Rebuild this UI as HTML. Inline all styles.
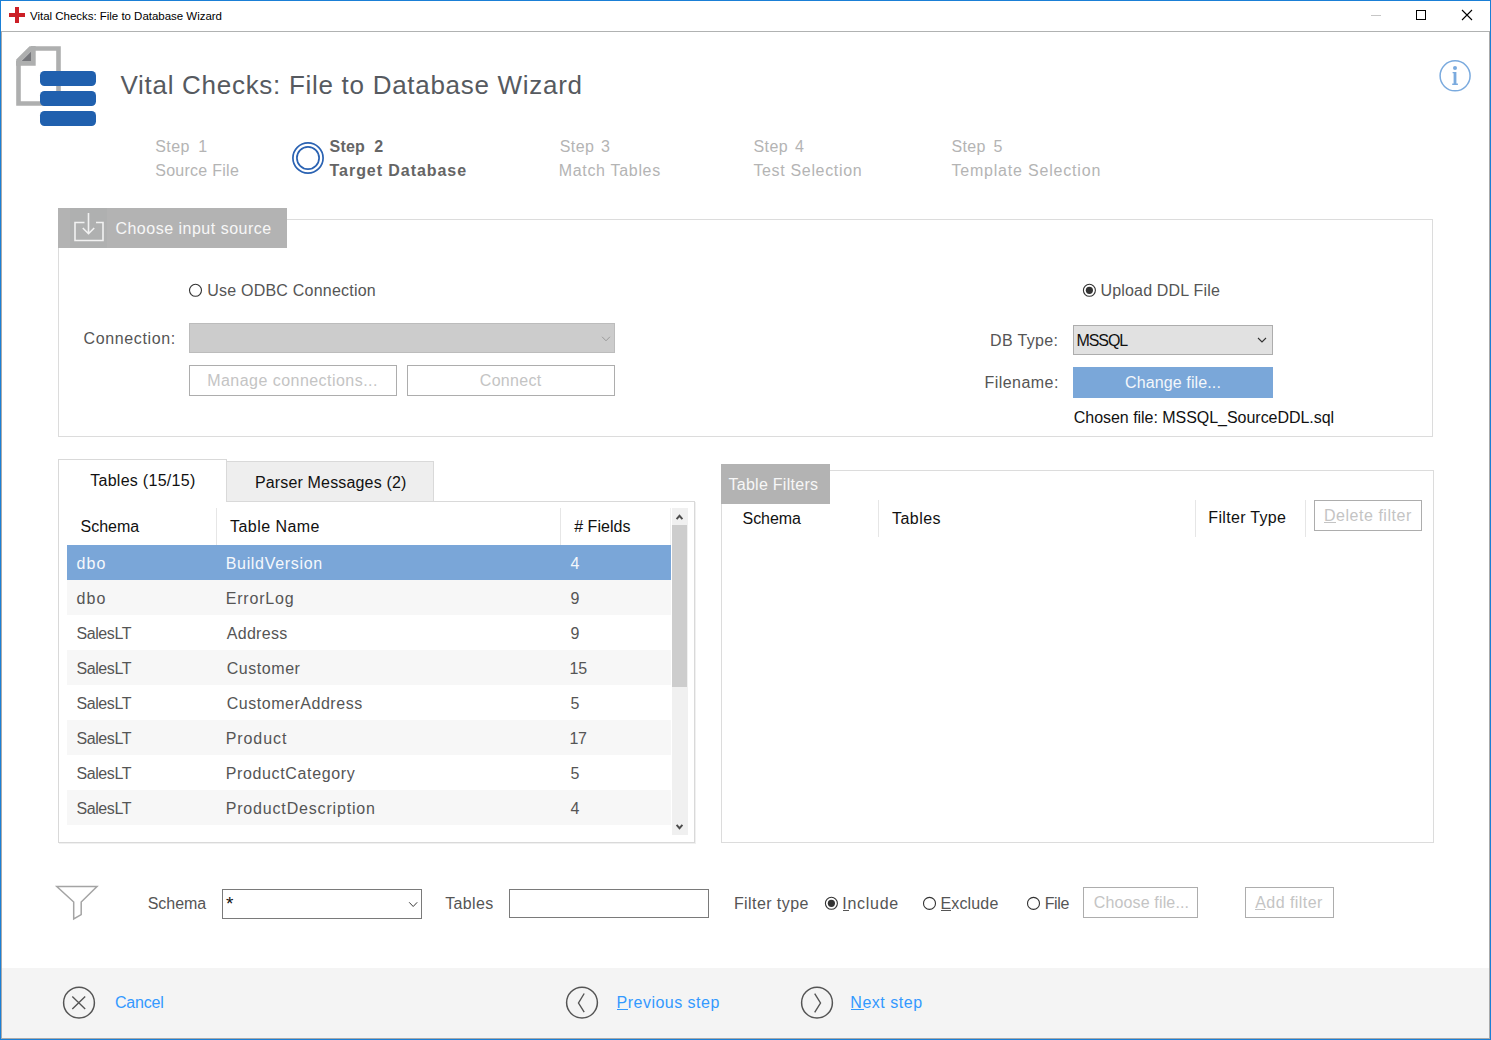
<!DOCTYPE html>
<html>
<head>
<meta charset="utf-8">
<title>Vital Checks: File to Database Wizard</title>
<style>
html,body{margin:0;padding:0;}
body{width:1491px;height:1040px;overflow:hidden;position:relative;background:#ffffff;font-family:"Liberation Sans",sans-serif;}
.a{position:absolute;box-sizing:border-box;}
.t{position:absolute;white-space:nowrap;line-height:1;font-family:"Liberation Sans",sans-serif;}
.ul{position:absolute;height:1px;}
svg{position:absolute;overflow:visible;}
</style>
</head>
<body>
<!-- window frame -->
<div class="a" style="left:0;top:0;width:1491px;height:1040px;border:1px solid #1a7fd6;"></div>
<div class="a" style="left:1px;top:31px;width:1489px;height:1008px;border:1px solid #aaaaaa;border-top-color:#b0b2b2;"></div>
<!-- title bar icon -->
<div class="a" style="left:9px;top:13px;width:16px;height:4px;background:#cc1f26;"></div>
<div class="a" style="left:15px;top:7px;width:4px;height:16px;background:#cc1f26;"></div>
<!-- window buttons -->
<div class="a" style="left:1371px;top:15px;width:10px;height:1px;background:#c6c6c6;"></div>
<div class="a" style="left:1416px;top:10px;width:10px;height:10px;border:1px solid #000;"></div>
<svg style="left:1462px;top:10px" width="10" height="10" viewBox="0 0 10 10"><path d="M0 0L10 10M10 0L0 10" stroke="#000" stroke-width="1.1"/></svg>
<!-- logo -->
<svg style="left:0;top:0" width="110" height="130" viewBox="0 0 110 130">
  <path d="M30.5 48.5 H58.5 V103.5 H18.5 V60.5 Z" fill="#fff" stroke="#aeafaf" stroke-width="4.6"/>
  <path d="M33.3 46 V63.3 H16" fill="none" stroke="#aeafaf" stroke-width="4.8"/>
  <path d="M21.5 61 L31 51.5 V61 Z" fill="#76777b"/>
  <rect x="40" y="71" width="56" height="15" rx="4.5" fill="#2060ae"/>
  <rect x="40" y="91" width="56" height="15" rx="4.5" fill="#2060ae"/>
  <rect x="40" y="111" width="56" height="15" rx="4.5" fill="#2060ae"/>
</svg>
<!-- info icon -->
<svg style="left:1439px;top:60px" width="32" height="32" viewBox="0 0 32 32">
  <circle cx="16.1" cy="15.8" r="15.0" fill="none" stroke="#7aaade" stroke-width="1.5"/>
  <circle cx="16" cy="8.1" r="2" fill="#7aaade"/>
  <path d="M13.6 11.9 H17.4 V23.4 H18.9 V24.9 H13.2 V23.4 H14.6 V13.2 H13.6 Z" fill="#7aaade"/>
</svg>
<!-- step 2 circle -->
<svg style="left:292px;top:142px" width="32" height="32" viewBox="0 0 32 32">
  <circle cx="16" cy="16" r="15.1" fill="none" stroke="#2a62b2" stroke-width="1.7"/>
  <circle cx="16" cy="16" r="11.1" fill="none" stroke="#2a62b2" stroke-width="1.7"/>
</svg>
<!-- group box -->
<div class="a" style="left:58px;top:219px;width:1375px;height:218px;border:1px solid #dcdcdc;"></div>
<div class="a" style="left:58px;top:208px;width:229px;height:40px;background:#b3b3b3;"></div>
<div class="a" style="left:70px;top:208px;width:37px;height:40px;background:#afb0b0;"></div>
<svg style="left:70px;top:208px" width="40" height="40" viewBox="0 0 40 40">
  <path d="M14.5 14.5 H5 V32.5 H33 V14.5 H26" fill="none" stroke="#f2f2f2" stroke-width="1.6"/>
  <path d="M18.5 5 V25.5 M12.8 20 L18.5 25.7 L24.2 20" fill="none" stroke="#f2f2f2" stroke-width="1.6"/>
</svg>
<!-- radios -->
<svg style="left:188px;top:283px" width="15" height="15" viewBox="0 0 15 15"><circle cx="7.5" cy="7.3" r="6" fill="#fff" stroke="#333" stroke-width="1.1"/></svg>
<svg style="left:1082px;top:283px" width="15" height="15" viewBox="0 0 15 15"><circle cx="7.4" cy="7.3" r="6" fill="#fff" stroke="#333" stroke-width="1.1"/><circle cx="7.4" cy="7.3" r="3.6" fill="#333"/></svg>
<!-- connection combo -->
<div class="a" style="left:189px;top:323px;width:426px;height:30px;background:#cccccc;border:1px solid #bcbcbc;"></div>
<svg style="left:600px;top:335px" width="11" height="8" viewBox="0 0 11 8"><path d="M2.1 1.8 L6 5.8 L9.9 1.8" fill="none" stroke="#9a9a9a" stroke-width="1"/></svg>
<div class="a" style="left:189px;top:365px;width:208px;height:31px;border:1px solid #adadad;background:#fff;"></div>
<div class="a" style="left:407px;top:365px;width:208px;height:31px;border:1px solid #adadad;background:#fff;"></div>
<!-- db type combo -->
<div class="a" style="left:1073px;top:325px;width:200px;height:30px;background:#e1e1e1;border:1px solid #adadad;"></div>
<svg style="left:1256px;top:336px" width="12" height="8" viewBox="0 0 12 8"><path d="M2 2 L6 6 L10 2" fill="none" stroke="#333" stroke-width="1.1"/></svg>
<div class="a" style="left:1073px;top:367px;width:200px;height:31px;background:#7aa7d9;"></div>
<!-- tabs -->
<div class="a" style="left:58px;top:501px;width:637px;height:342px;border:1px solid #d9d9d9;"></div>
<div class="a" style="left:695px;top:502px;width:1px;height:342px;background:#f0f0f0;"></div>
<div class="a" style="left:59px;top:843px;width:637px;height:1px;background:#f0f0f0;"></div>
<div class="a" style="left:226px;top:461px;width:208px;height:41px;background:#eeeeee;border:1px solid #d9d9d9;"></div>
<div class="a" style="left:58px;top:459px;width:169px;height:43px;background:#fff;border:1px solid #d9d9d9;border-bottom:none;"></div>
<!-- table header separators -->
<div class="a" style="left:216px;top:508px;width:1px;height:37px;background:#e6e6e6;"></div>
<div class="a" style="left:560px;top:508px;width:1px;height:37px;background:#e6e6e6;"></div>
<div class="a" style="left:670px;top:508px;width:1px;height:37px;background:#f0f0f0;"></div>
<!-- rows -->
<div class="a" style="left:67px;top:545px;width:604px;height:35px;background:#7aa6d8;"></div>
<div class="a" style="left:67px;top:580px;width:604px;height:35px;background:#f7f7f7;"></div>
<div class="a" style="left:67px;top:650px;width:604px;height:35px;background:#f7f7f7;"></div>
<div class="a" style="left:67px;top:720px;width:604px;height:35px;background:#f7f7f7;"></div>
<div class="a" style="left:67px;top:790px;width:604px;height:35px;background:#f7f7f7;"></div>
<!-- scrollbar -->
<div class="a" style="left:672px;top:508px;width:16px;height:327px;background:#f0f0f0;"></div>
<div class="a" style="left:672px;top:525px;width:15px;height:162px;background:#cdcdcd;"></div>
<svg style="left:672px;top:508px" width="16" height="17" viewBox="0 0 16 17"><path d="M4.6 11.2 L7.5 7.8 L10.4 11.2" fill="none" stroke="#4d4d4d" stroke-width="1.9"/></svg>
<svg style="left:672px;top:818px" width="16" height="17" viewBox="0 0 16 17"><path d="M4.6 6.8 L7.5 10.2 L10.4 6.8" fill="none" stroke="#4d4d4d" stroke-width="1.9"/></svg>
<!-- table filters panel -->
<div class="a" style="left:721px;top:470px;width:713px;height:373px;border:1px solid #dcdcdc;"></div>
<div class="a" style="left:721px;top:464px;width:109px;height:40px;background:#b3b3b3;"></div>
<div class="a" style="left:878px;top:500px;width:1px;height:37px;background:#e6e6e6;"></div>
<div class="a" style="left:1195px;top:500px;width:1px;height:37px;background:#e6e6e6;"></div>
<div class="a" style="left:1305px;top:500px;width:1px;height:37px;background:#e6e6e6;"></div>
<div class="a" style="left:1314px;top:500px;width:108px;height:31px;border:1px solid #adadad;background:#fff;"></div>
<!-- filter row -->
<svg style="left:50px;top:880px" width="56" height="48" viewBox="0 0 56 48">
  <path d="M6.8 6.6 H47 L31.2 22 V34.6 L23.7 39 V22 Z" fill="none" stroke="#a4a4a4" stroke-width="1.5" stroke-linejoin="miter"/>
</svg>
<div class="a" style="left:222px;top:889px;width:200px;height:30px;border:1px solid #7a7a7a;background:#fff;"></div>
<svg style="left:406px;top:899px" width="14" height="10" viewBox="0 0 14 10"><path d="M3.2 3.3 L7.2 7.5 L11.2 3.3" fill="none" stroke="#3a3a3a" stroke-width="1"/></svg>
<div class="a" style="left:509px;top:889px;width:200px;height:29px;border:1px solid #7a7a7a;background:#fff;"></div>
<svg style="left:824px;top:896px" width="15" height="15" viewBox="0 0 15 15"><circle cx="7.4" cy="7.3" r="6" fill="#fff" stroke="#333" stroke-width="1.1"/><circle cx="7.4" cy="7.3" r="3.6" fill="#333"/></svg>
<svg style="left:922px;top:896px" width="15" height="15" viewBox="0 0 15 15"><circle cx="7.5" cy="7.4" r="6" fill="#fff" stroke="#333" stroke-width="1.1"/></svg>
<svg style="left:1026px;top:896px" width="15" height="15" viewBox="0 0 15 15"><circle cx="7.5" cy="7.4" r="6" fill="#fff" stroke="#333" stroke-width="1.1"/></svg>
<div class="a" style="left:1083px;top:887px;width:115px;height:31px;border:1px solid #adadad;background:#fff;"></div>
<div class="a" style="left:1245px;top:887px;width:89px;height:31px;border:1px solid #adadad;background:#fff;"></div>
<!-- footer -->
<div class="a" style="left:2px;top:968px;width:1487px;height:70px;background:#f4f4f4;"></div>
<svg style="left:62px;top:986px" width="34" height="34" viewBox="0 0 34 34">
  <circle cx="17" cy="16.7" r="15.4" fill="none" stroke="#555" stroke-width="1.5"/>
  <path d="M10.3 10.6 L23.2 22.9 M23.2 10.6 L10.3 22.9" stroke="#555" stroke-width="1.4"/>
</svg>
<svg style="left:565px;top:986px" width="34" height="34" viewBox="0 0 34 34">
  <circle cx="17" cy="16.6" r="15.4" fill="none" stroke="#555" stroke-width="1.5"/>
  <path d="M19.2 7.5 L13.5 17 L19.2 26.2" fill="none" stroke="#555" stroke-width="1.4"/>
</svg>
<svg style="left:800px;top:986px" width="34" height="34" viewBox="0 0 34 34">
  <circle cx="17" cy="16.7" r="15.4" fill="none" stroke="#555" stroke-width="1.5"/>
  <path d="M14.7 7.6 L20.5 17 L14.7 26.4" fill="none" stroke="#555" stroke-width="1.4"/>
</svg>

<div class="t" style="left:30.00px;top:11.00px;font-size:11.5px;color:#000000;letter-spacing:-0.023px">Vital Checks: File to Database Wizard</div>
<div class="t" style="left:120.50px;top:71.80px;font-size:26px;color:#565a60;letter-spacing:0.712px">Vital Checks: File to Database Wizard</div>
<div class="t" style="left:155.20px;top:139.00px;font-size:16px;color:#b4b4b4;letter-spacing:0.428px">Step</div>
<div class="t" style="left:198.20px;top:139.00px;font-size:16px;color:#b4b4b4">1</div>
<div class="t" style="left:155.20px;top:163.00px;font-size:16px;color:#b4b4b4;letter-spacing:0.268px">Source File</div>
<div class="t" style="left:329.60px;top:139.00px;font-size:16px;color:#656565;font-weight:bold;letter-spacing:0.167px">Step</div>
<div class="t" style="left:374.20px;top:139.00px;font-size:16px;color:#656565;font-weight:bold">2</div>
<div class="t" style="left:329.60px;top:163.00px;font-size:16px;color:#656565;font-weight:bold;letter-spacing:0.942px">Target Database</div>
<div class="t" style="left:559.70px;top:139.00px;font-size:16px;color:#b4b4b4;letter-spacing:0.428px">Step</div>
<div class="t" style="left:601.00px;top:139.00px;font-size:16px;color:#b4b4b4">3</div>
<div class="t" style="left:558.70px;top:163.00px;font-size:16px;color:#b4b4b4;letter-spacing:0.685px">Match Tables</div>
<div class="t" style="left:753.40px;top:139.00px;font-size:16px;color:#b4b4b4;letter-spacing:0.461px">Step</div>
<div class="t" style="left:795.00px;top:139.00px;font-size:16px;color:#b4b4b4">4</div>
<div class="t" style="left:753.40px;top:163.00px;font-size:16px;color:#b4b4b4;letter-spacing:0.661px">Test Selection</div>
<div class="t" style="left:951.40px;top:139.00px;font-size:16px;color:#b4b4b4;letter-spacing:0.395px">Step</div>
<div class="t" style="left:993.60px;top:139.00px;font-size:16px;color:#b4b4b4">5</div>
<div class="t" style="left:951.40px;top:163.00px;font-size:16px;color:#b4b4b4;letter-spacing:0.807px">Template Selection</div>
<div class="t" style="left:115.40px;top:221.00px;font-size:16px;color:#f7f7f7;letter-spacing:0.502px">Choose input source</div>
<div class="t" style="left:207.20px;top:282.80px;font-size:16px;color:#555555;letter-spacing:0.221px">Use ODBC Connection</div>
<div class="t" style="left:83.50px;top:331.00px;font-size:16px;color:#555555;letter-spacing:0.635px">Connection:</div>
<div class="t" style="left:207.20px;top:373.00px;font-size:16px;color:#c4c4c4;letter-spacing:0.463px">Manage connections...</div>
<div class="t" style="left:479.80px;top:373.00px;font-size:16px;color:#c4c4c4;letter-spacing:0.309px">Connect</div>
<div class="t" style="left:1100.40px;top:282.90px;font-size:16px;color:#555555;letter-spacing:0.187px">Upload DDL File</div>
<div class="t" style="left:990.10px;top:333.00px;font-size:16px;color:#555555;letter-spacing:0.349px">DB Type:</div>
<div class="t" style="left:1076.50px;top:333.00px;font-size:16px;color:#111111;letter-spacing:-1.079px">MSSQL</div>
<div class="t" style="left:984.40px;top:374.50px;font-size:16px;color:#555555;letter-spacing:0.474px">Filename:</div>
<div class="t" style="left:1125.00px;top:374.50px;font-size:16px;color:#f4f7fb;letter-spacing:0.120px">Change file...</div>
<div class="t" style="left:1073.80px;top:410.00px;font-size:16px;color:#111111;letter-spacing:-0.035px">Chosen file: MSSQL_SourceDDL.sql</div>
<div class="t" style="left:90.20px;top:473.00px;font-size:16px;color:#111111;letter-spacing:0.280px">Tables (15/15)</div>
<div class="t" style="left:254.90px;top:475.10px;font-size:16px;color:#111111;letter-spacing:0.163px">Parser Messages (2)</div>
<div class="t" style="left:80.60px;top:518.80px;font-size:16px;color:#111111;letter-spacing:-0.039px">Schema</div>
<div class="t" style="left:230.10px;top:518.80px;font-size:16px;color:#111111;letter-spacing:0.436px">Table Name</div>
<div class="t" style="left:574.20px;top:518.70px;font-size:16px;color:#111111;letter-spacing:0.040px"># Fields</div>
<div class="t" style="left:76.50px;top:555.50px;font-size:16px;color:#f5f8fc;letter-spacing:1.102px">dbo</div>
<div class="t" style="left:225.70px;top:555.50px;font-size:16px;color:#f5f8fc;letter-spacing:0.687px">BuildVersion</div>
<div class="t" style="left:570.50px;top:555.50px;font-size:16px;color:#f5f8fc">4</div>
<div class="t" style="left:76.50px;top:590.50px;font-size:16px;color:#555555;letter-spacing:1.102px">dbo</div>
<div class="t" style="left:225.70px;top:590.50px;font-size:16px;color:#555555;letter-spacing:0.807px">ErrorLog</div>
<div class="t" style="left:570.50px;top:590.50px;font-size:16px;color:#555555">9</div>
<div class="t" style="left:76.50px;top:625.50px;font-size:16px;color:#555555;letter-spacing:-0.422px">SalesLT</div>
<div class="t" style="left:226.70px;top:625.50px;font-size:16px;color:#555555;letter-spacing:0.317px">Address</div>
<div class="t" style="left:570.50px;top:625.50px;font-size:16px;color:#555555">9</div>
<div class="t" style="left:76.50px;top:660.50px;font-size:16px;color:#555555;letter-spacing:-0.422px">SalesLT</div>
<div class="t" style="left:226.70px;top:660.50px;font-size:16px;color:#555555;letter-spacing:0.554px">Customer</div>
<div class="t" style="left:569.50px;top:660.50px;font-size:16px;color:#555555;letter-spacing:-0.098px">15</div>
<div class="t" style="left:76.50px;top:695.50px;font-size:16px;color:#555555;letter-spacing:-0.422px">SalesLT</div>
<div class="t" style="left:226.70px;top:695.50px;font-size:16px;color:#555555;letter-spacing:0.532px">CustomerAddress</div>
<div class="t" style="left:570.50px;top:695.50px;font-size:16px;color:#555555">5</div>
<div class="t" style="left:76.50px;top:730.50px;font-size:16px;color:#555555;letter-spacing:-0.422px">SalesLT</div>
<div class="t" style="left:225.70px;top:730.50px;font-size:16px;color:#555555;letter-spacing:0.917px">Product</div>
<div class="t" style="left:569.50px;top:730.50px;font-size:16px;color:#555555;letter-spacing:-0.398px">17</div>
<div class="t" style="left:76.50px;top:765.50px;font-size:16px;color:#555555;letter-spacing:-0.422px">SalesLT</div>
<div class="t" style="left:225.70px;top:765.50px;font-size:16px;color:#555555;letter-spacing:0.646px">ProductCategory</div>
<div class="t" style="left:570.50px;top:765.50px;font-size:16px;color:#555555">5</div>
<div class="t" style="left:76.50px;top:800.50px;font-size:16px;color:#555555;letter-spacing:-0.422px">SalesLT</div>
<div class="t" style="left:225.70px;top:800.50px;font-size:16px;color:#555555;letter-spacing:0.831px">ProductDescription</div>
<div class="t" style="left:570.50px;top:800.50px;font-size:16px;color:#555555">4</div>
<div class="t" style="left:728.50px;top:476.80px;font-size:16px;color:#f7f7f7;letter-spacing:0.271px">Table Filters</div>
<div class="t" style="left:742.50px;top:510.80px;font-size:16px;color:#111111;letter-spacing:-0.039px">Schema</div>
<div class="t" style="left:891.90px;top:510.80px;font-size:16px;color:#111111;letter-spacing:0.490px">Tables</div>
<div class="t" style="left:1208.30px;top:510.40px;font-size:16px;color:#111111;letter-spacing:0.321px">Filter Type</div>
<div class="t" style="left:1323.90px;top:508.10px;font-size:16px;color:#c4c4c4;letter-spacing:0.542px">Delete filter</div>
<div class="ul" style="left:1324.3px;top:522px;width:11.7px;background:#c4c4c4"></div>
<div class="t" style="left:147.70px;top:895.80px;font-size:16px;color:#555555;letter-spacing:-0.039px">Schema</div>
<div class="t" style="left:445.20px;top:896.00px;font-size:16px;color:#555555;letter-spacing:0.350px">Tables</div>
<div class="t" style="left:733.90px;top:895.70px;font-size:16px;color:#555555;letter-spacing:0.426px">Filter type</div>
<div class="t" style="left:842.30px;top:895.70px;font-size:16px;color:#555555;letter-spacing:0.717px">Include</div>
<div class="ul" style="left:843.3px;top:910px;width:5.6px;background:#555555"></div>
<div class="t" style="left:940.40px;top:895.50px;font-size:16px;color:#555555;letter-spacing:0.163px">Exclude</div>
<div class="ul" style="left:941.0px;top:910px;width:9.8px;background:#555555"></div>
<div class="t" style="left:1044.70px;top:895.50px;font-size:16px;color:#555555;letter-spacing:-0.394px">File</div>
<div class="t" style="left:1093.70px;top:894.70px;font-size:16px;color:#c4c4c4;letter-spacing:0.151px">Choose file...</div>
<div class="t" style="left:1255.20px;top:894.70px;font-size:16px;color:#c4c4c4;letter-spacing:0.454px">Add filter</div>
<div class="ul" style="left:1254.8px;top:909px;width:10.0px;background:#c4c4c4"></div>
<div class="t" style="left:115.00px;top:995.00px;font-size:16px;color:#3399ff;letter-spacing:-0.210px">Cancel</div>
<div class="t" style="left:616.60px;top:995.00px;font-size:16px;color:#3399ff;letter-spacing:0.480px">Previous step</div>
<div class="ul" style="left:617.0px;top:1009px;width:10.8px;background:#3399ff"></div>
<div class="t" style="left:850.30px;top:995.00px;font-size:16px;color:#3399ff;letter-spacing:0.527px">Next step</div>
<div class="ul" style="left:851.0px;top:1009px;width:13.0px;background:#3399ff"></div>
<div class="t" style="left:226.00px;top:894.00px;font-size:19px;color:#111111">*</div>
</body>
</html>
